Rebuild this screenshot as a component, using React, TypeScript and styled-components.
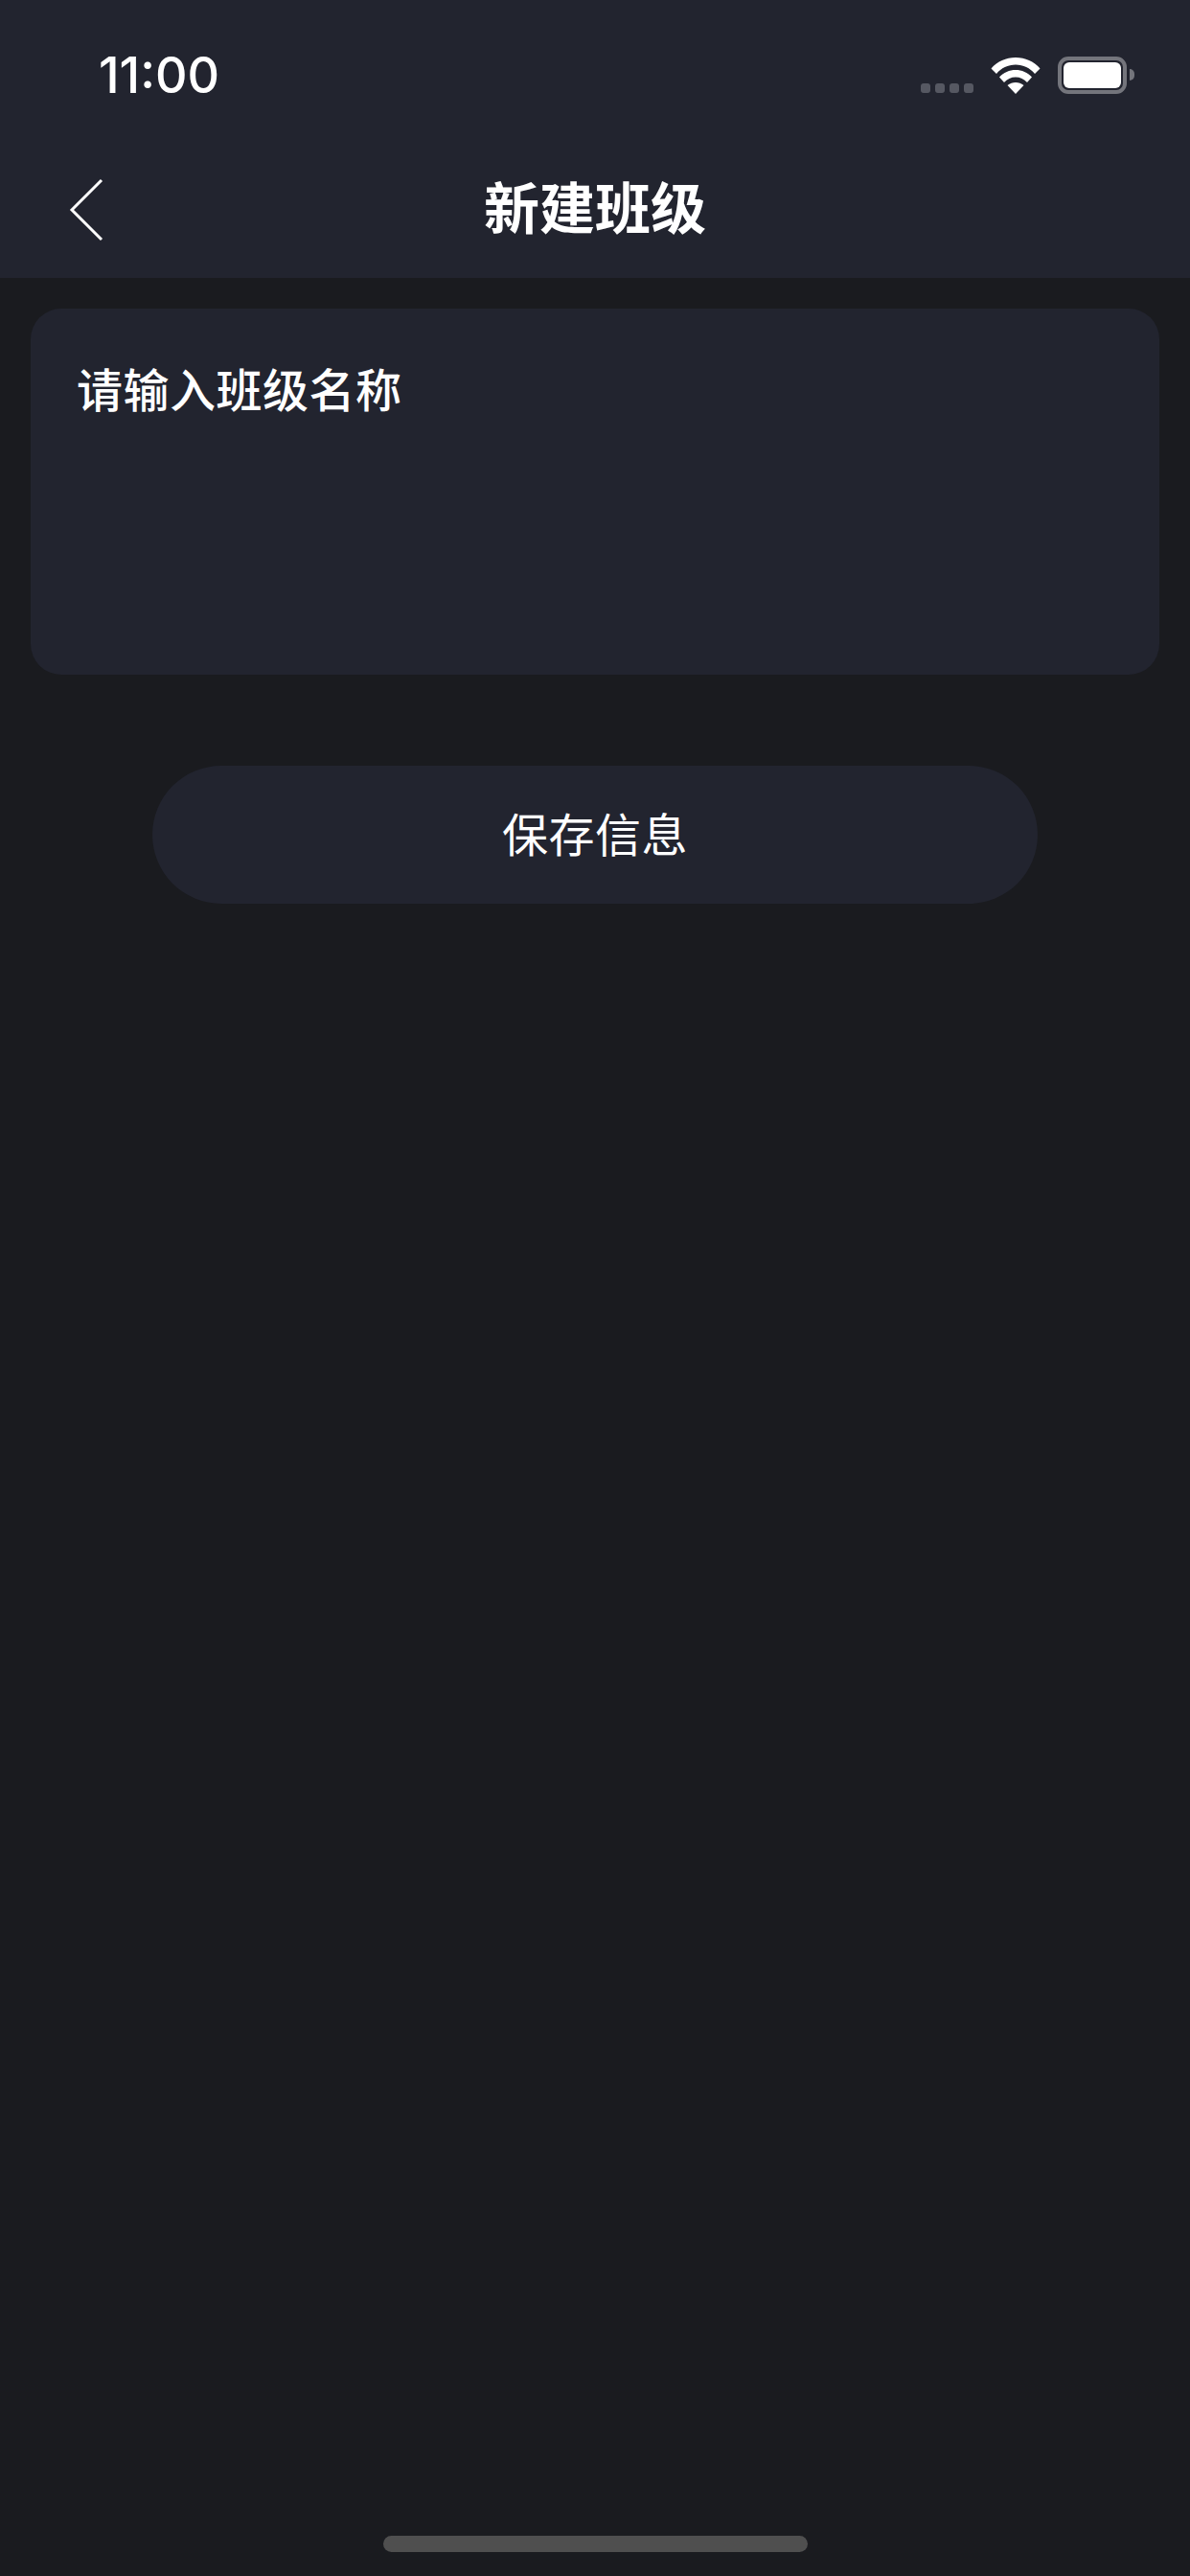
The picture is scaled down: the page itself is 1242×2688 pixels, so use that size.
import React from "react";
import styled, { createGlobalStyle } from "styled-components";

const Global = createGlobalStyle`
  html, body { margin: 0; padding: 0; background: #1a1b1f; }
  * { box-sizing: border-box; }
`;

const Page = styled.div`
  width: 1242px;
  height: 2688px;
  overflow: hidden;
  display: flex;
  flex-direction: column;
  background: #1a1b1f;
  color: #fff;
  font-family: "Noto Sans CJK SC", "Noto Sans", sans-serif;
`;

const Header = styled.header`
  height: 290px;
  flex: none;
  background: #22242f;
`;

const StatusBar = styled.div`
  height: 148px;
  padding: 59px 66px 0 103px;
  display: flex;
  align-items: flex-start;
  justify-content: space-between;
`;

const Time = styled.span`
  font-family: Inter, "Liberation Sans", sans-serif;
  font-size: 52px;
  font-weight: 500;
  line-height: 39px;
`;

const StatusIcons = styled.div`
  display: flex;
  align-items: flex-end;
  height: 39px;
`;

const Signal = styled.div`
  display: flex;
  gap: 5px;
  margin: 0 18px 1px 0;
`;

const SignalDot = styled.span`
  width: 10px;
  height: 10px;
  border-radius: 3px;
  background: #565862;
`;

const WifiIcon = styled.svg`
  width: 52px;
  height: 41px;
  margin-right: 18px;
  display: block;
`;

const Battery = styled.div`
  position: relative;
  width: 72px;
  height: 39px;
  padding: 2px;
  border: 4px solid #74757c;
  border-radius: 11px;
`;

const BatteryFill = styled.div`
  width: 100%;
  height: 100%;
  background: #fff;
  border-radius: 6px;
`;

const BatteryNub = styled.span`
  position: absolute;
  right: -12px;
  top: 9px;
  width: 5px;
  height: 12px;
  border-radius: 0 6px 6px 0;
  background: #74757c;
`;

const NavBar = styled.nav`
  height: 142px;
  padding: 0 0 0 70px;
  display: grid;
  grid-template-columns: 1fr auto 1fr;
  align-items: center;
`;

const BackIcon = styled.svg`
  width: 38px;
  height: 68px;
  display: block;
`;

const Title = styled.h1`
  margin: 0 0 0 -70px;
  padding-bottom: 10px;
  font-size: 58px;
  font-weight: 700;
  line-height: 80px;
`;

const Main = styled.main`
  flex: 1;
  display: flex;
  flex-direction: column;
  padding: 32px 32px 0;
`;

const NameCard = styled.div`
  height: 382px;
  padding: 50px 48px;
  border-radius: 32px;
  background: #22242f;
  font-size: 48px;
  font-weight: 500;
  line-height: 64px;
  letter-spacing: 0.5px;
`;

const SaveButton = styled.button`
  align-self: center;
  width: 924px;
  height: 144px;
  margin-top: 95px;
  padding: 0 0 6px;
  border: 0;
  border-radius: 72px;
  background: #22242f;
  color: #fff;
  font: 400 48px/64px "Noto Sans CJK SC", "Noto Sans", sans-serif;
  letter-spacing: 0.5px;
`;

const HomeIndicator = styled.div`
  flex: none;
  width: 443px;
  height: 17px;
  margin: 0 auto 25px;
  border-radius: 9px;
  background: #4f4f4f;
`;

export default function App() {
  return (
    <Page>
      <Global />
      <Header>
        <StatusBar>
          <Time>11:00</Time>
          <StatusIcons>
            <Signal>
              <SignalDot />
              <SignalDot />
              <SignalDot />
              <SignalDot />
            </Signal>
            <WifiIcon viewBox="0 0 52 41">
              <path
                fill="#fff"
                d="M0.5 14.5C7 7 16 3 26 3s19 4 25.5 11.5L46 20C41 14 34 10.5 26 10.5S11 14 6 20Z"
              />
              <path
                fill="#fff"
                d="M9 23.5C13.5 18.5 19.5 16 26 16s12.5 2.500 17 7.500L38 29C35 25.500 30.500 23.500 26 23.500S17 25.500 14 29Z"
              />
              <path fill="#fff" d="M17.500 32C20 30 23 29 26 29s6 1 8.500 3L26 41Z" />
            </WifiIcon>
            <Battery>
              <BatteryFill />
              <BatteryNub />
            </Battery>
          </StatusIcons>
        </StatusBar>
        <NavBar>
          <BackIcon viewBox="0 0 38 68" fill="none" stroke="#fff" strokeWidth="3">
            <path d="M36 3 L5 34 L36 65" />
          </BackIcon>
          <Title>新建班级</Title>
        </NavBar>
      </Header>
      <Main>
        <NameCard>请输入班级名称</NameCard>
        <SaveButton>保存信息</SaveButton>
      </Main>
      <HomeIndicator />
    </Page>
  );
}
